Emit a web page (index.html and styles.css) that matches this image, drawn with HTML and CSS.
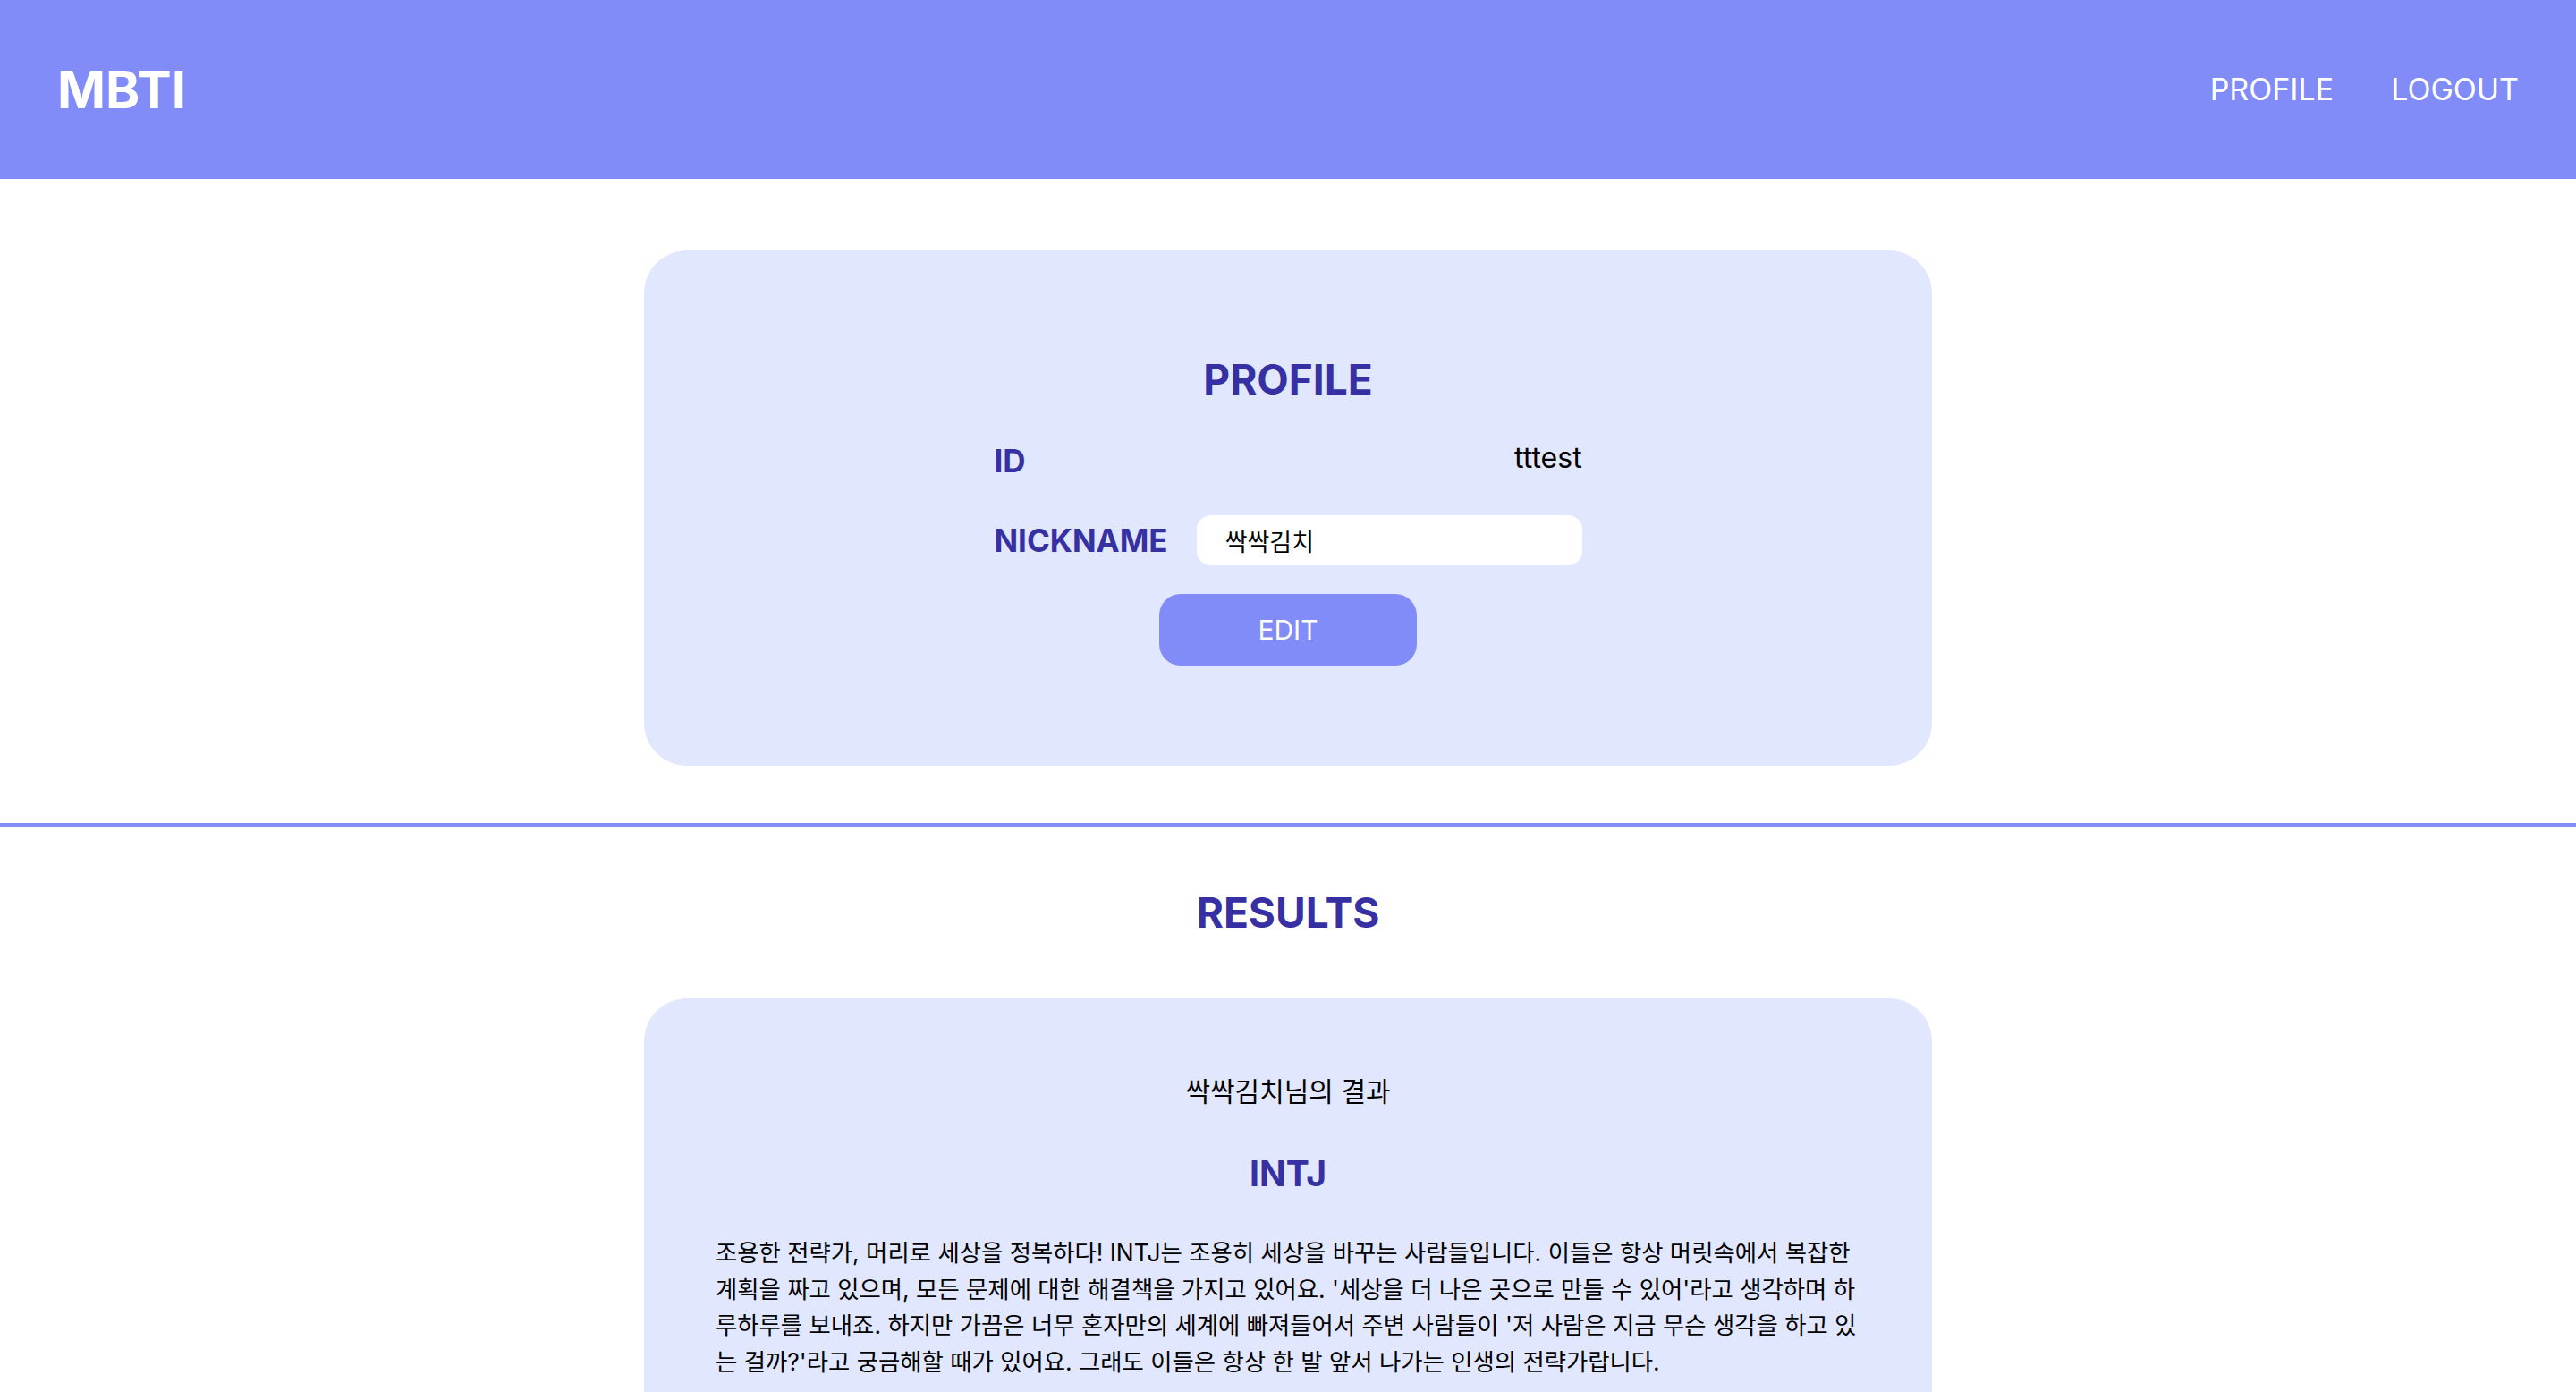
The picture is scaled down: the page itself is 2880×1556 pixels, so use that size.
FILE: index.html
```html
<!DOCTYPE html>
<html lang="ko">
<head>
<meta charset="utf-8">
<title>MBTI</title>
<link rel="stylesheet" href="styles.css">
</head>
<body>
<header class="topbar">
  <div class="logo">MBTI</div>
  <nav class="nav">
    <a class="nav-link" href="#">PROFILE</a>
    <a class="nav-link" href="#">LOGOUT</a>
  </nav>
</header>
<main>
  <section class="card profile-card">
    <h2 class="section-title">PROFILE</h2>
    <div class="fields">
      <div class="label">ID</div>
      <div class="value">tttest</div>
      <div class="label label-mid">NICKNAME</div>
      <input class="nick-input" type="text" value="싹싹김치">
    </div>
    <button class="edit-btn">EDIT</button>
  </section>
</main>
<hr class="divider">
<main>
  <h2 class="section-title results-title">RESULTS</h2>
  <section class="card result-card">
    <div class="result-name">싹싹김치님의 결과</div>
    <div class="result-type">INTJ</div>
    <p class="result-desc">조용한 전략가, 머리로 세상을 정복하다! INTJ는 조용히 세상을 바꾸는 사람들입니다. 이들은 항상 머릿속에서 복잡한 계획을 짜고 있으며, 모든 문제에 대한 해결책을 가지고 있어요. '세상을 더 나은 곳으로 만들 수 있어'라고 생각하며 하루하루를 보내죠. 하지만 가끔은 너무 혼자만의 세계에 빠져들어서 주변 사람들이 '저 사람은 지금 무슨 생각을 하고 있는 걸까?'라고 궁금해할 때가 있어요. 그래도 이들은 항상 한 발 앞서 나가는 인생의 전략가랍니다.</p>
  </section>
</main>
</body>
</html>
```

FILE: styles.css
```css
* { box-sizing: border-box; }

body {
  margin: 0;
  font-family: Inter, "Noto Sans CJK KR", sans-serif;
  color: #000;
  background: #fff;
}

.topbar {
  height: 200px;
  background: #818cf8;
  display: flex;
  align-items: center;
  justify-content: space-between;
  padding: 0 64px;
}

.logo {
  color: #fff;
  font-size: 58px;
  font-weight: 700;
  line-height: 72px;
}

.nav {
  display: flex;
  gap: 64px;
}

.nav-link {
  color: #fff;
  text-decoration: none;
  font-size: 34px;
  line-height: 54px;
}

main {
  width: 1440px;
  margin: 0 auto;
}

.card {
  background: #e0e7ff;
  border-radius: 48px;
}

.profile-card {
  margin-top: 80px;
  padding: 112px 0;
  display: flex;
  flex-direction: column;
  align-items: center;
}

.section-title {
  margin: 0 0 32px;
  font-size: 46px;
  line-height: 64px;
  font-weight: 700;
  color: #3730a3;
  text-align: center;
}

.fields {
  display: grid;
  grid-template-columns: auto 431px;
  column-gap: 32px;
  row-gap: 34px;
}

.label {
  font-size: 35px;
  line-height: 54px;
  font-weight: 700;
  color: #3730a3;
}

.label-mid { align-self: center; }

.value {
  justify-self: end;
  font-size: 32px;
  line-height: 48px;
}

.nick-input {
  height: 56px;
  width: 431px;
  border: none;
  border-radius: 16px;
  background: #fff;
  padding: 0 32px;
  font-family: Inter, "Noto Sans CJK KR", sans-serif;
  font-size: 27px;
  color: #000;
  outline: none;
}

.edit-btn {
  margin-top: 32px;
  width: 288px;
  height: 80px;
  border: none;
  border-radius: 24px;
  background: #818cf8;
  color: #fff;
  font-family: Inter, "Noto Sans CJK KR", sans-serif;
  font-size: 30px;
}

.divider {
  margin: 64px 0 0;
  border: none;
  height: 4px;
  background: #818cf8;
}

.results-title {
  margin-top: 64px;
  margin-bottom: 64px;
}

.result-card {
  padding: 80px;
  min-height: 700px;
}

.result-name {
  text-align: center;
  font-size: 30px;
  line-height: 48px;
  margin-bottom: 40px;
}

.result-type {
  text-align: center;
  font-size: 39px;
  line-height: 56px;
  font-weight: 700;
  color: #3730a3;
  margin-bottom: 40px;
}

.result-desc {
  margin: 0 -4px 0 0;
  font-size: 26.4px;
  line-height: 40.5px;
}
```
